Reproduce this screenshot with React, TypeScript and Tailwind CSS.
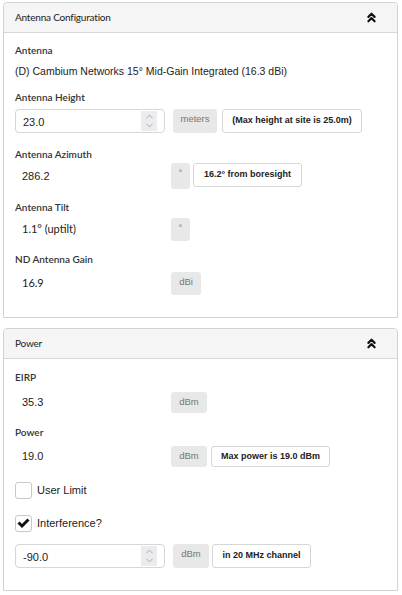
import { ChevronsUp, ChevronUp, ChevronDown } from "lucide-react";
import type { ReactNode } from "react";

const arial = "font-['Liberation_Sans',Arial,sans-serif]";
const lato = "font-['Lato',sans-serif]";

function Panel({ title, children }: { title: string; children: ReactNode }) {
  return (
    <div className="rounded-t-[4px] border border-[#d2d2d2] bg-white">
      <div className="flex h-[30px] items-center justify-between rounded-t-[4px] border-b border-[#d6d6d6] bg-[#f5f5f5] pl-[11px] pr-[18px]">
        <span className={`${lato} text-[10px] tracking-[-0.2px] text-[#222]`}>{title}</span>
        <ChevronsUp size={15} strokeWidth={3.4} className="text-[#111]" />
      </div>
      {children}
    </div>
  );
}

function Label({ children, className = "" }: { children: ReactNode; className?: string }) {
  return (
    <div className={`${lato} h-[16px] text-[10px] font-semibold leading-[16px] text-[#333] ${className}`}>
      {children}
    </div>
  );
}

function Addon({ children, className = "" }: { children: ReactNode; className?: string }) {
  return (
    <div
      className={`${arial} flex items-start justify-center self-stretch rounded-[3px] bg-[#e8e8e8] pt-[4px] text-[9.5px] leading-[12px] text-[#777] ${className}`}
    >
      {children}
    </div>
  );
}

function Note({ children, className = "" }: { children: ReactNode; className?: string }) {
  return (
    <div
      className={`${arial} flex items-center justify-center rounded-[3px] border border-[#d6d6d6] text-[9px] font-bold text-[#222] ${className}`}
    >
      {children}
    </div>
  );
}

function SpinInput({ value }: { value: string }) {
  return (
    <div className="flex h-full w-[150px] items-center justify-between rounded-[4px] border border-[#d6d6d6] pl-[7px] pr-[7px]">
      <span className={`${arial} pt-[2px] text-[11px] text-[#222]`}>{value}</span>
      <div className="flex h-[20px] w-[16px] flex-col items-center justify-center bg-[#ececf0] text-[#8a8a8a]">
        <ChevronUp size={11} strokeWidth={1.5} className="-mb-[2px]" />
        <ChevronDown size={11} strokeWidth={1.5} />
      </div>
    </div>
  );
}

function ReadValue({ value, font = arial }: { value: string; font?: string }) {
  return (
    <div className={`${font} w-[156px] self-center pl-[7px] text-[11px] text-[#222]`}>{value}</div>
  );
}

function Checkbox({ checked }: { checked?: boolean }) {
  return (
    <div className="flex h-[17px] w-[17px] items-center justify-center rounded-[3px] border border-[#c8c8c8] bg-white">
      {checked && (
        <svg width="13" height="11" viewBox="0 0 13 11">
          <path d="M0.5 5.6 L2.6 3.5 L5 5.9 L10.4 0.5 L12.5 2.6 L5 10.1 Z" fill="#111" />
        </svg>
      )}
    </div>
  );
}

export default function App() {
  return (
    <div className="ml-[3px] mt-[2px] w-[395px] bg-white">
      <Panel title="Antenna Configuration">
        <div className="px-[11px] pb-[22px] pt-[9px]">
          <Label>Antenna</Label>
          <div className={`${arial} mt-[5px] h-[16px] text-[10.5px] leading-[16px] text-[#222]`}>
            (D) Cambium Networks 15° Mid-Gain Integrated (16.3 dBi)
          </div>

          <Label className="mt-[10px]">Antenna Height</Label>
          <div className="mt-[4px] flex h-[24px] items-stretch">
            <SpinInput value="23.0" />
            <Addon className="ml-[8px] w-[44px]">meters</Addon>
            <Note className="ml-[5px] w-[140px]">(Max height at site is 25.0m)</Note>
          </div>

          <Label className="mt-[13px]">Antenna Azimuth</Label>
          <div className="mt-[1px] flex h-[26px] items-stretch">
            <ReadValue value="286.2" />
            <Addon className="w-[19px]">°</Addon>
            <Note className="mb-[2px] ml-[3px] w-[109px]">16.2° from boresight</Note>
          </div>

          <Label className="mt-[10px]">Antenna Tilt</Label>
          <div className="mt-[3px] flex h-[23px] items-stretch">
            <ReadValue value="1.1° (uptilt)" font={lato} />
            <Addon className="w-[19px]">°</Addon>
          </div>

          <Label className="mt-[10px]">ND Antenna Gain</Label>
          <div className="mt-[5px] flex h-[23px] items-stretch">
            <ReadValue value="16.9" font={lato} />
            <Addon className="w-[30px]">dBi</Addon>
          </div>
        </div>
      </Panel>

      <div className="mt-[10px]">
        <Panel title="Power">
          <div className="px-[11px] pb-[22px] pt-[10px]">
            <Label>EIRP</Label>
            <div className="mt-[7px] flex h-[21px] items-stretch">
              <ReadValue value="35.3" />
              <Addon className="w-[36px]">dBm</Addon>
            </div>

            <Label className="mt-[11px]">Power</Label>
            <div className="mt-[6px] flex h-[21px] items-stretch">
              <ReadValue value="19.0" />
              <Addon className="w-[36px]">dBm</Addon>
              <Note className="ml-[4px] w-[119px]">Max power is 19.0 dBm</Note>
            </div>

            <div className="mt-[15px] flex h-[17px] items-center gap-[5px]">
              <Checkbox />
              <span className={`${arial} text-[11px] text-[#222]`}>User Limit</span>
            </div>

            <div className="mt-[16px] flex h-[17px] items-center gap-[5px]">
              <Checkbox checked />
              <span className={`${arial} text-[11px] text-[#222]`}>Interference?</span>
            </div>

            <div className="mt-[12px] flex h-[24px] items-stretch">
              <SpinInput value="-90.0" />
              <Addon className="ml-[8px] w-[36px]">dBm</Addon>
              <Note className="ml-[3px] w-[99px]">in 20 MHz channel</Note>
            </div>
          </div>
        </Panel>
      </div>
    </div>
  );
}
